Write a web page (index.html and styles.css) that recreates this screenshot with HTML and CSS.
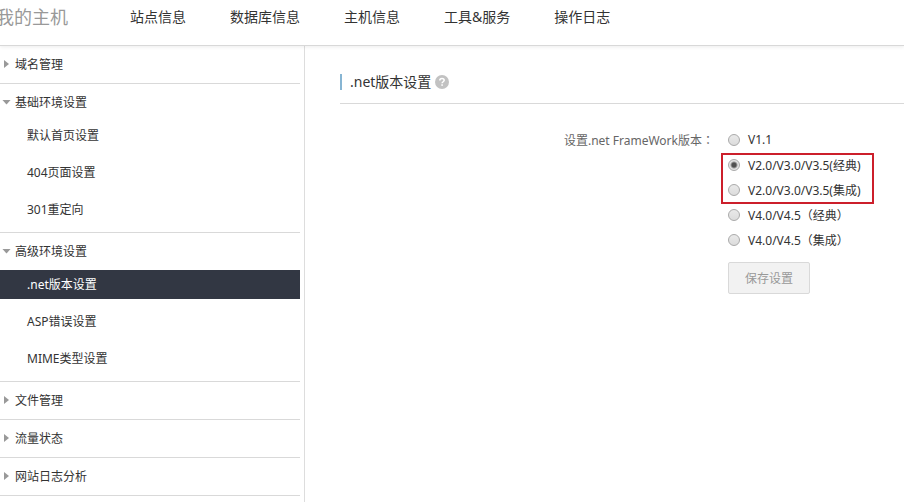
FILE: index.html
```html
<!DOCTYPE html>
<html lang="zh-CN">
<head>
  <meta charset="UTF-8">
  <meta name="viewport" content="width=device-width, initial-scale=1">
  <title>.net版本设置 - 我的主机</title>
  <link rel="stylesheet" href="styles.css">
</head>
<body>
  <header class="header">
    <a class="brand" href="#">我的主机</a>
    <nav class="nav">
      <a href="#">站点信息</a>
      <a href="#">数据库信息</a>
      <a href="#">主机信息</a>
      <a href="#">工具&amp;服务</a>
      <a href="#">操作日志</a>
    </nav>
  </header>

  <div class="layout">
    <aside class="sidebar">
      <div class="group">
        <a class="group-title" href="#">域名管理</a>
      </div>
      <div class="group open">
        <a class="group-title" href="#">基础环境设置</a>
        <a class="item" href="#">默认首页设置</a>
        <a class="item" href="#">404页面设置</a>
        <a class="item" href="#">301重定向</a>
      </div>
      <div class="group open">
        <a class="group-title" href="#">高级环境设置</a>
        <a class="item active" href="#">.net版本设置</a>
        <a class="item" href="#">ASP错误设置</a>
        <a class="item" href="#">MIME类型设置</a>
      </div>
      <div class="group">
        <a class="group-title" href="#">文件管理</a>
      </div>
      <div class="group">
        <a class="group-title" href="#">流量状态</a>
      </div>
      <div class="group">
        <a class="group-title" href="#">网站日志分析</a>
      </div>
    </aside>

    <main class="content">
      <div class="page-title">
        <h1>.net版本设置</h1>
        <svg class="help" viewBox="0 0 14 14" width="14" height="14" aria-label="帮助">
          <circle cx="7" cy="7" r="7" fill="#c2c2c2"/>
          <path d="M4.8 5.5C4.8 4.2 5.7 3.5 7 3.5s2.2.7 2.2 1.8c0 1.4-2.1 1.5-2.1 3" fill="none" stroke="#fff" stroke-width="1.5"/>
          <rect x="6.3" y="9.3" width="1.6" height="1.5" fill="#fff"/>
        </svg>
      </div>

      <form class="form">
        <div class="form-label" id="versionLabel">设置.net FrameWork版本<span class="punct" lang="zh-TW">：</span></div>
        <div class="form-field" role="radiogroup" aria-labelledby="versionLabel">
          <label class="radio"><input type="radio" name="version" value="1.1">V1.1</label>
          <div class="marked">
            <label class="radio"><input type="radio" name="version" value="2.0c" checked>V2.0/V3.0/V3.5(经典)</label>
            <label class="radio"><input type="radio" name="version" value="2.0i">V2.0/V3.0/V3.5(集成)</label>
          </div>
          <label class="radio"><input type="radio" name="version" value="4.0c">V4.0/V4.5（经典）</label>
          <label class="radio"><input type="radio" name="version" value="4.0i">V4.0/V4.5（集成）</label>
          <button class="save" type="button">保存设置</button>
        </div>
      </form>
    </main>
  </div>
</body>
</html>
```
FILE: styles.css
```css
* {
  box-sizing: border-box;
}
body {
  margin: 0;
  min-height: 100vh;
  display: flex;
  flex-direction: column;
  font-family: "Noto Sans", "Noto Sans CJK SC", sans-serif;
  font-size: 12px;
  color: #333;
  background: #fff;
}
a {
  color: inherit;
  text-decoration: none;
}

/* header */
.header {
  position: relative;
  display: flex;
  align-items: flex-start;
  height: 46px;
  border-bottom: 1px solid #d8d8d8;
  box-shadow: 0 1px 4px rgba(0, 0, 0, 0.08);
  white-space: nowrap;
}
.brand {
  margin-left: -4px;
  line-height: 34px;
  font-size: 18px;
  color: #999;
}
.nav {
  display: flex;
  gap: 44px;
  margin-left: 62px;
  line-height: 34px;
  font-size: 14px;
}

/* sidebar */
.layout {
  flex: 1;
  display: flex;
}
.sidebar {
  flex: none;
  width: 305px;
  padding-right: 4px;
  border-right: 1px solid #ddd;
}
.group {
  border-bottom: 1px solid #d9d9d9;
}
.group-title {
  display: flex;
  align-items: center;
  height: 37px;
  padding-bottom: 1px;
  padding-left: 4px;
}
.group-title::before {
  content: "";
  width: 5px;
  height: 8px;
  margin-right: 6px;
  background: #999;
  clip-path: polygon(0 0, 100% 50%, 0 100%);
}
.open .group-title {
  padding-left: 2px;
}
.open .group-title::before {
  width: 9px;
  height: 5px;
  margin-right: 4px;
  clip-path: polygon(0 0, 100% 0, 50% 100%);
}
.item {
  display: block;
  margin-bottom: 8px;
  padding-left: 27px;
  line-height: 29px;
}
.item.active {
  background: #323743;
  color: #fff;
}

/* content */
.content {
  flex: 1;
  min-width: 0;
  padding-left: 35px;
}
.page-title {
  display: flex;
  align-items: center;
  height: 58px;
  padding-top: 14px;
  border-bottom: 1px solid #d9d9d9;
}
.page-title h1 {
  margin: 0;
  padding-left: 8px;
  border-left: 2px solid #87b5d3;
  line-height: 16px;
  font-size: 14px;
  font-weight: normal;
}
.help {
  margin-left: 4px;
}

.form {
  display: grid;
  grid-template-columns: 17fr 8fr;
  column-gap: 14px;
  padding-top: 23px;
  white-space: nowrap;
}
.form-label {
  line-height: 25px;
  text-align: right;
  color: #666;
}
.punct {
  font-family: "Noto Sans CJK TC", sans-serif;
}
.form-field {
  display: flex;
  flex-direction: column;
  align-items: flex-start;
}
.radio {
  display: flex;
  align-items: center;
  height: 25px;
}
.radio input {
  appearance: none;
  width: 12px;
  height: 12px;
  margin: 0 8px 0 0;
  border: 1px solid #aaa;
  border-radius: 50%;
  background: linear-gradient(#e9e9e9, #dcdcdc);
}
.radio input:checked {
  background: radial-gradient(circle, #505050 2px, #e4e4e4 4px);
}
.marked {
  position: relative;
}
.marked::after {
  content: "";
  position: absolute;
  inset: 1px -13px -2px -7px;
  border: 2px solid #cc1f2b;
  pointer-events: none;
}
.save {
  height: 32px;
  margin-top: 10px;
  padding: 0 16px;
  border: 1px solid #d9d9d9;
  border-radius: 2px;
  background: #f2f2f2;
  color: #999;
  font: inherit;
}
```
